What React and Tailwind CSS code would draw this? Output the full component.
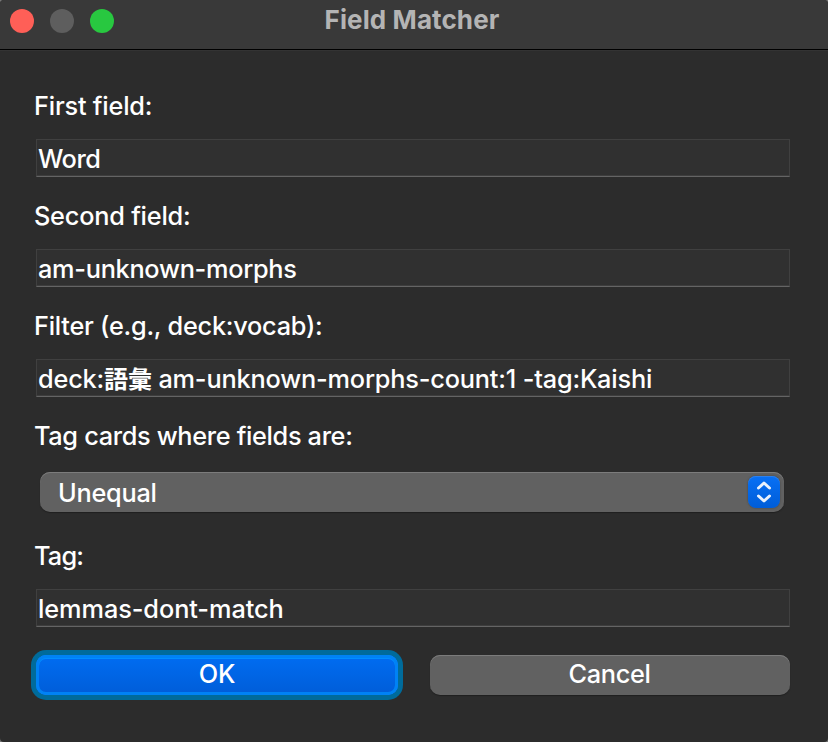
import React from "react";

function TextField({ label, value, labelTracking, valueTracking }) {
  return (
    <div className="flex flex-col gap-[17px]">
      <label className={`h-8 leading-8 whitespace-nowrap -ml-[2px] ${labelTracking}`}>{label}</label>
      <div className="h-[38px] border border-[#404040] border-b-[#646464] bg-[#303030] pl-[1px] leading-[38px] whitespace-nowrap shadow-[inset_0_-1px_0_#3d3d3d]">
        <span className={valueTracking}>{value}</span>
      </div>
    </div>
  );
}

export default function App() {
  return (
    <div className="h-[742px] w-[828px] bg-[#777777]">
      <div className="flex h-full flex-col overflow-hidden rounded-[4px] bg-[#2c2c2c] font-['Inter','Noto_Sans_CJK_JP',sans-serif] text-[25.3px] font-medium text-white">
        <header className="grid h-[50px] shrink-0 grid-cols-[1fr_auto_1fr] border-b border-black bg-[#393939] pb-2">
          <div className="flex items-center gap-4 pl-[10px]">
            <span className="size-6 rounded-full bg-[#ff5f57]" />
            <span className="size-6 rounded-full bg-[#5e5e5e]" />
            <span className="size-6 rounded-full bg-[#28c840]" />
          </div>
          <h1 className="h-10 pr-1 leading-10 text-[26px] font-bold tracking-[0.1px] text-[#b4b4b4]">Field Matcher</h1>
          <div />
        </header>
        <main className="flex flex-col gap-[23px] border-t border-[#333333] pt-[39px] pr-[38px] pl-9">
          <TextField label="First field:" value="Word" labelTracking="tracking-[-0.2px]" valueTracking="tracking-[-0.5px]" />
          <TextField label="Second field:" value="am-unknown-morphs" labelTracking="tracking-[-0.22px]" valueTracking="tracking-[-0.28px]" />
          <TextField
            label="Filter (e.g., deck:vocab):"
            value={<>deck:<span className="text-[24px] font-bold tracking-[-0.1px]">語彙</span> am-unknown-morphs-count:1 -tag:Kaishi</>}
            labelTracking="tracking-[-0.24px]"
            valueTracking="tracking-[-0.18px]"
          />
          <div className="flex flex-col gap-5">
            <label className="-ml-[2px] h-8 leading-8 tracking-[-0.33px] whitespace-nowrap">Tag cards where fields are:</label>
            <div className="mr-[6px] ml-1 mb-[5px] flex h-10 items-center justify-between rounded-[10px] bg-[#616161] pr-1 pl-[18px] shadow-[inset_0_1px_0_#7c7c7c,0_1px_1px_#202020]">
              <span className="pt-[2px] tracking-[-0.25px]">Unequal</span>
              <span className="flex size-8 items-center justify-center rounded-[8px] bg-linear-to-b from-[#0870f5] to-[#005dd8] shadow-[inset_0_1px_0_#2b80ee,0_0_2px_#404040]">
                <svg width="32" height="32" viewBox="0 0 32 32" fill="none" stroke="#e9f1fc" strokeWidth="3" strokeLinecap="round" strokeLinejoin="round">
                  <path d="M10.500 12 16 7l5.500 5M10.500 20 16 25l5.500-5" />
                </svg>
              </span>
            </div>
          </div>
          <TextField label="Tag:" value="lemmas-dont-match" labelTracking="tracking-[-0.8px]" valueTracking="tracking-[-0.07px]" />
          <div className="mt-[5px] flex gap-8">
            <button className="h-10 w-[362px] rounded-[10px] bg-linear-to-b from-[#006df2] to-[#005dd8] pb-[2px] tracking-[-0.2px] shadow-[0_0_0_5px_#006b9b,inset_0_0_0_3px_#0082f5,inset_0_1px_0_3px_#008eff]">OK</button>
            <button className="h-10 w-[360px] rounded-[10px] bg-[#616161] pr-px pb-[2px] tracking-[-0.3px] shadow-[inset_0_1px_0_#7c7c7c,0_1px_1px_#202020]">Cancel</button>
          </div>
        </main>
      </div>
    </div>
  );
}
